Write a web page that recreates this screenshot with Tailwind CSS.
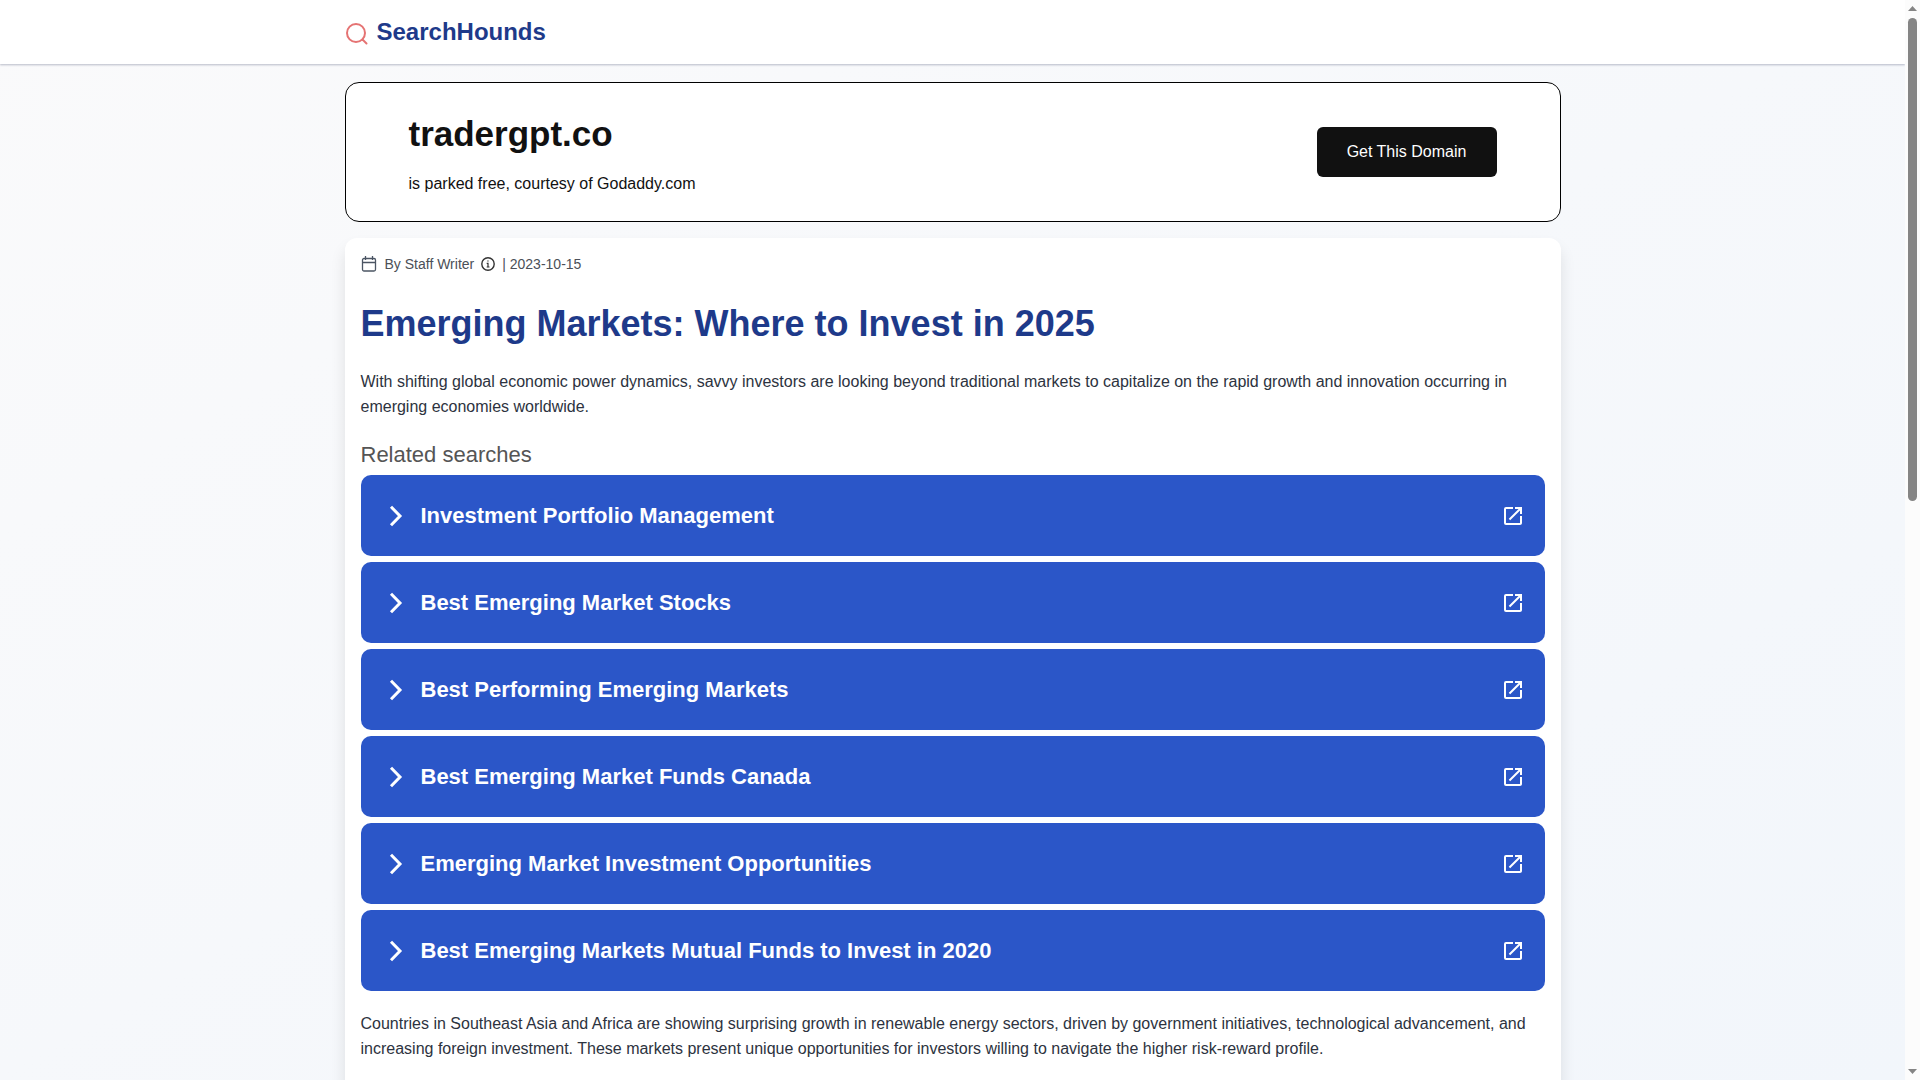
<!DOCTYPE html>
<html lang="en">
<head>
<meta charset="utf-8">
<meta name="viewport" content="width=device-width, initial-scale=1">
<title>Emerging Markets: Where to Invest in 2025</title>
<script src="https://cdn.jsdelivr.net/npm/@tailwindcss/browser@4"></script>
</head>
<body class="flex h-screen overflow-hidden bg-white font-['Liberation_Sans',Arial,sans-serif] text-base text-[#2d3340]">
<svg class="hidden">
  <symbol id="chevron" viewBox="0 0 24 24"><path d="M6 2.800 15 12l-9 9.200" fill="none" stroke="currentColor" stroke-width="3"/></symbol>
  <symbol id="open" viewBox="0 0 24 24"><path fill="currentColor" d="M19 19H5V5h7V3H5a2 2 0 0 0-2 2v14a2 2 0 0 0 2 2h14c1.100 0 2-.9 2-2v-7h-2v7zM14 3v2h3.590l-9.830 9.830 1.410 1.410L19 6.410V10h2V3h-7z"/></symbol>
</svg>
<div class="flex min-w-0 flex-1 flex-col overflow-hidden bg-linear-to-br from-[#fafafb] to-[#f2f6fb]">
  <header class="z-10 h-16 shrink-0 bg-white shadow-[0_1px_2px_rgba(30,40,80,0.3)]">
    <div class="mx-auto flex h-16 max-w-7xl items-center gap-2 px-8">
      <svg class="mt-1 size-6 text-[#e57373]" viewBox="0 0 24 24" fill="none" stroke="currentColor" stroke-width="2" stroke-linecap="round"><circle cx="11" cy="11" r="9"/><path d="m17.500 17.500 4 4"/></svg>
      <a href="#" class="text-2xl font-bold text-[#1e3a8a]">SearchHounds</a>
    </div>
  </header>
  <main class="mx-auto flex w-full max-w-7xl flex-1 flex-col gap-4 px-8 pt-[18px]">
    <section class="flex h-[140px] shrink-0 items-center justify-between rounded-[14px] border border-black bg-white px-[63px]">
      <div class="flex flex-col gap-[18px] pt-1.5 text-[#111]">
        <h2 class="text-[35px] leading-10 font-bold">tradergpt.co</h2>
        <p class="leading-6">is parked free, courtesy of Godaddy.com</p>
      </div>
      <button type="button" class="h-[50px] w-[180px] rounded-md bg-[#111] text-white">Get This Domain</button>
    </section>
    <article class="flex-1 shrink-0 rounded-xl bg-white px-4 pt-4 pb-12 shadow-[0_10px_15px_rgba(0,0,0,0.1)]">
      <div class="flex h-5 items-center text-sm text-[#4b5058]">
        <svg class="mr-2 size-4 text-[#4b5563]" viewBox="0 0 16 16" fill="none" stroke="currentColor" stroke-width="1.300"><rect x="1.500" y="2.500" width="13" height="12.500" rx="1.500"/><path d="M1.500 6.500h13M4.500 0v4M11.500 0v4"/></svg>
        <span>By Staff Writer</span>
        <svg class="mx-1.5 size-4 text-[#333]" viewBox="0 0 16 16" fill="none" stroke="currentColor" stroke-width="1.400"><circle cx="8" cy="8" r="6.200"/><path stroke-width="1.200" d="M6.700 7.300H8V11M6.700 11h2.800M7.300 5h1.300"/></svg>
        <span>| 2023-10-15</span>
      </div>
      <h1 class="mt-[25px] text-4xl leading-[50px] font-bold text-[#1e3a8a]">Emerging Markets: Where to Invest in 2025</h1>
      <p class="mt-5 leading-[25px]">With shifting global economic power dynamics, savvy investors are looking beyond traditional markets to capitalize on the rapid growth and innovation occurring in emerging economies worldwide.</p>
      <nav aria-labelledby="related" class="mt-6">
        <h3 id="related" class="mb-2 text-[22px] leading-6 text-[#555]">Related searches</h3>
        <ul class="flex flex-col gap-1.5 text-[22px] font-bold text-white">
          <li><a href="#" class="flex h-[81px] items-center rounded-[10px] bg-[#2b56c8] pr-5 pl-6"><svg class="mr-3 size-6"><use href="#chevron"/></svg><span class="flex-1">Investment Portfolio Management</span><svg class="size-6"><use href="#open"/></svg></a></li>
          <li><a href="#" class="flex h-[81px] items-center rounded-[10px] bg-[#2b56c8] pr-5 pl-6"><svg class="mr-3 size-6"><use href="#chevron"/></svg><span class="flex-1">Best Emerging Market Stocks</span><svg class="size-6"><use href="#open"/></svg></a></li>
          <li><a href="#" class="flex h-[81px] items-center rounded-[10px] bg-[#2b56c8] pr-5 pl-6"><svg class="mr-3 size-6"><use href="#chevron"/></svg><span class="flex-1">Best Performing Emerging Markets</span><svg class="size-6"><use href="#open"/></svg></a></li>
          <li><a href="#" class="flex h-[81px] items-center rounded-[10px] bg-[#2b56c8] pr-5 pl-6"><svg class="mr-3 size-6"><use href="#chevron"/></svg><span class="flex-1">Best Emerging Market Funds Canada</span><svg class="size-6"><use href="#open"/></svg></a></li>
          <li><a href="#" class="flex h-[81px] items-center rounded-[10px] bg-[#2b56c8] pr-5 pl-6"><svg class="mr-3 size-6"><use href="#chevron"/></svg><span class="flex-1">Emerging Market Investment Opportunities</span><svg class="size-6"><use href="#open"/></svg></a></li>
          <li><a href="#" class="flex h-[81px] items-center rounded-[10px] bg-[#2b56c8] pr-5 pl-6"><svg class="mr-3 size-6"><use href="#chevron"/></svg><span class="flex-1">Best Emerging Markets Mutual Funds to Invest in 2020</span><svg class="size-6"><use href="#open"/></svg></a></li>
        </ul>
      </nav>
      <p class="mt-5 leading-[25px]">Countries in Southeast Asia and Africa are showing surprising growth in renewable energy sectors, driven by government initiatives, technological advancement, and increasing foreign investment. These markets present unique opportunities for investors willing to navigate the higher risk-reward profile.</p>
    </article>
  </main>
</div>
<div class="flex w-[15px] shrink-0 flex-col items-center bg-[#fcfcfc] pt-1.5 pb-1.5 text-[#858585]" aria-hidden="true">
  <svg class="h-[5px] w-[9px]" viewBox="0 0 9 5"><path fill="currentColor" d="M0 5 4.500 0 9 5z"/></svg>
  <div class="mt-[7px] min-h-0 flex-1"><div class="h-[46%] w-[9px] rounded-full bg-[#858585]"></div></div>
  <svg class="h-[5px] w-[9px]" viewBox="0 0 9 5"><path fill="currentColor" d="M0 0 4.500 5 9 0z"/></svg>
</div>
</body>
</html>
